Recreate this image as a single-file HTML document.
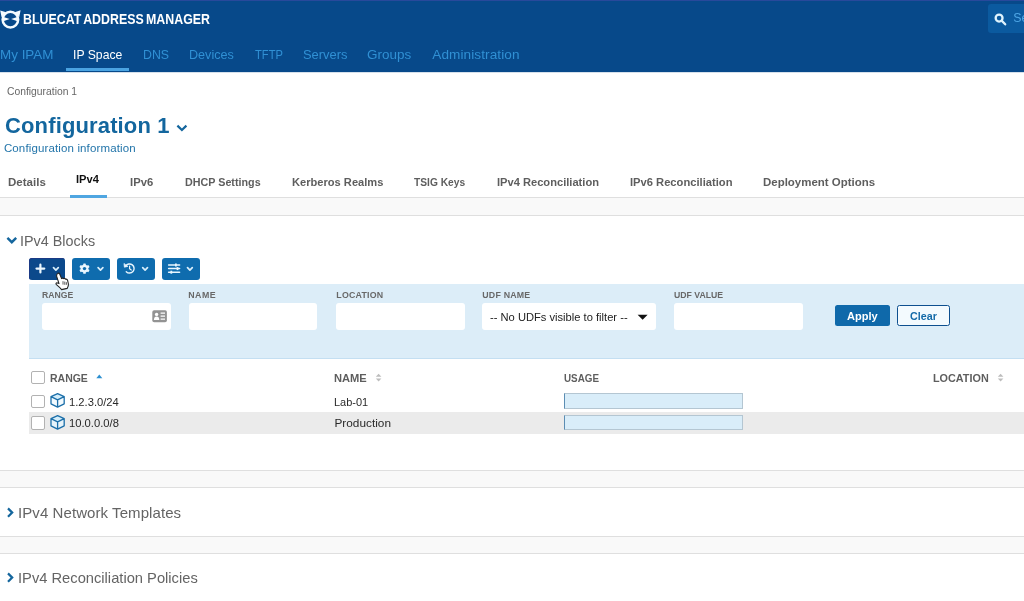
<!DOCTYPE html>
<html><head><meta charset="utf-8">
<style>
*{box-sizing:border-box;margin:0;padding:0}
html,body{width:1024px;height:601px;overflow:hidden;background:#fff;font-family:"Liberation Sans",sans-serif}
body{position:relative;filter:blur(0.5px)}
.a,.t,svg{position:absolute}
.t{white-space:nowrap}
.hl{left:0;width:1024px;height:1.4px;background:#dfdfdf}
.band{left:0;width:1024px;background:#f9f9f9}
.tb{top:258.4px;height:21.4px;border-radius:3px;background:#0f6cae}
.fi{top:303.2px;height:27.1px;background:#fff;border-radius:3px}
.cb{left:30.8px;width:13.8px;height:13.4px;border:1.8px solid #b2b2b2;border-radius:2px;background:#fff}
.ub{left:563.8px;width:179.4px;height:15.2px;background:#d9edf9;border:1px solid #b4c6d2;border-left:1.3px solid #5b8db3}
</style></head><body>
<!-- header -->
<div class="a" style="left:0;top:0;width:1024px;height:71.9px;background:#07498a"></div>
<div class="a" style="left:0;top:0;width:1024px;height:1.2px;background:#28499b"></div>
<div class="a" style="left:0;top:71.9px;width:1024px;height:1px;background:#c3d3e3;opacity:.7"></div>
<div class="a" style="left:65.6px;top:68px;width:63.4px;height:2.8px;background:#4aa3e1"></div>
<div class="a" style="left:988.3px;top:4.2px;width:40px;height:28.4px;background:#0b5a9f;border-radius:3px"></div>
<svg style="left:0;top:8px" width="24" height="24" viewBox="0 0 24 24">
 <circle cx="10.4" cy="11.6" r="7.8" fill="none" stroke="#f4fbff" stroke-width="2.5"/>
 <path d="M1.6 9.2 L0.2 2.4 L6.2 4.2 Z M19.2 9.2 L20.6 2.3 L14.6 4.2 Z" fill="#f4fbff"/>
 <path d="M2.6 8.7 L9.7 11.1 L2.6 13.5 Z M18.2 8.7 L11.1 11.1 L18.2 13.5 Z" fill="#f4fbff"/>
</svg>
<svg style="left:992.6px;top:12px" width="16" height="16" viewBox="0 0 16 16"><circle cx="6.1" cy="6.1" r="3.45" fill="none" stroke="#dff3fd" stroke-width="2.3"/><path d="M8.9 8.9 L12.2 12.3" stroke="#dff3fd" stroke-width="2.3" stroke-linecap="round"/></svg>

<!-- title chevron -->
<svg style="left:176px;top:123.6px" width="12" height="9" viewBox="0 0 12 9"><path d="M1.4 1.6 L5.9 6 L10.4 1.6" fill="none" stroke="#14669d" stroke-width="2.2"/></svg>

<!-- tabs lines -->
<div class="a band" style="top:197.6px;height:18px"></div>
<div class="a hl" style="top:196.8px"></div>
<div class="a hl" style="top:215px"></div>
<div class="a" style="left:70px;top:194.8px;width:36.8px;height:2.8px;background:#4fa6e1"></div>

<!-- section chevrons -->
<svg style="left:6.2px;top:235.5px" width="12" height="10" viewBox="0 0 12 10"><path d="M1.4 1.8 L5.8 6.2 L10.2 1.8" fill="none" stroke="#14669d" stroke-width="2.4"/></svg>
<svg style="left:6.4px;top:506.6px" width="9" height="12" viewBox="0 0 9 12"><path d="M2 1.4 L6.2 5.6 L2 9.8" fill="none" stroke="#14669d" stroke-width="2.2"/></svg>
<svg style="left:6.4px;top:572.2px" width="9" height="12" viewBox="0 0 9 12"><path d="M2 1.4 L6.2 5.6 L2 9.8" fill="none" stroke="#14669d" stroke-width="2.2"/></svg>

<!-- toolbar -->
<div class="a tb" style="left:29.1px;width:36px;background:#0b498b;box-shadow:inset 1px 1px 0 #1b3a85"></div>
<div class="a tb" style="left:72.1px;width:37.8px"></div>
<div class="a tb" style="left:117.1px;width:37.8px"></div>
<div class="a tb" style="left:161.9px;width:37.8px"></div>
<svg style="left:29px;top:258px" width="172" height="22" viewBox="0 0 172 22">
 <g fill="none" stroke="#d9eefb" stroke-width="1.7" stroke-linecap="round" stroke-linejoin="round">
  <path d="M24.5 9.7 L26.9 12.1 L29.3 9.7"/>
  <path d="M69.1 9.7 L71.5 12.1 L73.9 9.7"/>
  <path d="M113.7 9.7 L116.1 12.1 L118.5 9.7"/>
  <path d="M158.5 9.7 L160.9 12.1 L163.3 9.7"/>
 </g>
 <!-- plus -->
 <path d="M7.5 10.55 H15.3 M11.4 6.65 V14.45" stroke="#eaf6fe" stroke-width="2.2" stroke-linecap="round" fill="none"/>
 <!-- gear -->
 <g transform="translate(55.5,10.6)">
  <g fill="#eaf6fe">
   <rect x="-1.3" y="-5.2" width="2.6" height="10.4" rx=".6"/>
   <rect x="-1.3" y="-5.2" width="2.6" height="10.4" rx=".6" transform="rotate(60)"/>
   <rect x="-1.3" y="-5.2" width="2.6" height="10.4" rx=".6" transform="rotate(120)"/>
   <circle r="3.9"/>
  </g>
  <circle r="1.7" fill="#0f6cae"/>
 </g>
 <!-- history -->
 <g transform="translate(100.6,10.5) scale(.93)" fill="none" stroke="#eaf6fe" stroke-linecap="round" stroke-linejoin="round">
  <path d="M-4.2 -2.6 A4.9 4.9 0 1 1 -3.6 3.4" stroke-width="1.5"/>
  <path d="M-6 -5 L-5.6 -1.4 L-2.2 -2.2 Z" fill="#eaf6fe" stroke-width=".8"/>
  <path d="M0 -2.6 V0.4 L1.8 1.6" stroke-width="1.3"/>
 </g>
 <!-- sliders -->
 <g stroke="#eaf6fe" stroke-width="1.5" fill="none" stroke-linecap="round">
  <path d="M139.6 7 H150.6 M139.6 10.6 H150.6 M139.6 14.2 H150.6"/>
 </g>
 <g fill="#eaf6fe"><rect x="146" y="5.5" width="1.8" height="3"/><rect x="147.6" y="9.1" width="1.8" height="3"/><rect x="141.4" y="12.7" width="1.8" height="3"/></g>
</svg>

<!-- filter panel -->
<div class="a" style="left:28.8px;top:284.3px;width:996px;height:74.6px;background:#dcedf8;border-bottom:1.2px solid #c4dff2"></div>
<div class="a fi" style="left:42px;width:128.6px"></div>
<div class="a fi" style="left:188.8px;width:128.7px"></div>
<div class="a fi" style="left:335.8px;width:129.1px"></div>
<div class="a fi" style="left:482.4px;width:173.4px"></div>
<div class="a fi" style="left:674.2px;width:128.7px"></div>
<svg style="left:152px;top:310px" width="16" height="13" viewBox="0 0 16 13">
 <rect x=".3" y=".2" width="14.6" height="12" rx="1.8" fill="#939393"/>
 <circle cx="4.6" cy="4.4" r="1.7" fill="#fff"/><path d="M1.9 10 Q2 6.6 4.6 6.6 Q7.2 6.6 7.3 10 Z" fill="#fff"/>
 <path d="M8.6 3.2 H13 M8.6 6.2 H13 M8.6 9.2 H13" stroke="#fff" stroke-width="1.3"/>
</svg>
<svg style="left:637px;top:314px" width="12" height="7" viewBox="0 0 12 7"><path d="M0.6 0.7 H10.6 L5.6 5.7 Z" fill="#111"/></svg>
<div class="a" style="left:834.9px;top:305.2px;width:55.5px;height:21.2px;background:#0f69aa;border-radius:2.5px"></div>
<div class="a" style="left:897.1px;top:305.2px;width:52.6px;height:21.2px;background:#f3fafe;border:1.5px solid #0d4f8f;border-radius:2.5px"></div>

<!-- table -->
<div class="a" style="left:29px;top:412.3px;width:995px;height:21.4px;background:#ebebeb"></div>
<div class="a cb" style="top:370.6px"></div>
<div class="a cb" style="top:394.7px"></div>
<div class="a cb" style="top:416.2px"></div>
<svg style="left:96px;top:373.6px" width="7" height="5" viewBox="0 0 7 5"><path d="M0.3 4.2 L3.3 0.6 L6.3 4.2 Z" fill="#2c8fd0"/></svg>
<svg style="left:375px;top:373px" width="7" height="10" viewBox="0 0 7 10"><path d="M0.8 3.8 L3.6 0.8 L6.4 3.8 Z M0.8 5.6 L3.6 8.6 L6.4 5.6 Z" fill="#bdbdbd"/></svg>
<svg style="left:997px;top:373px" width="7" height="10" viewBox="0 0 7 10"><path d="M0.8 3.8 L3.6 0.8 L6.4 3.8 Z M0.8 5.6 L3.6 8.6 L6.4 5.6 Z" fill="#bdbdbd"/></svg>
<svg style="left:49px;top:392px" width="18" height="17" viewBox="0 0 18 17"><g id="cube"><path d="M8.6 1.6 L15.2 4.6 L8.6 7.8 L2 4.6 Z" fill="#d4eefb"/><path d="M2 4.6 L8.6 7.8 L15.2 4.6 V11.8 L8.6 15.2 L2 11.8 Z" fill="#f2faff"/><path d="M8.6 1.6 L15.2 4.6 V11.8 L8.6 15.2 L2 11.8 V4.6 Z M2 4.6 L8.6 7.8 L15.2 4.6 M8.6 7.8 V15.2" fill="none" stroke="#1c6fa9" stroke-width="1.3" stroke-linejoin="round"/></g></svg>
<svg style="left:49px;top:413.8px" width="18" height="17" viewBox="0 0 18 17"><path d="M8.6 1.6 L15.2 4.6 L8.6 7.8 L2 4.6 Z" fill="#d4eefb"/><path d="M2 4.6 L8.6 7.8 L15.2 4.6 V11.8 L8.6 15.2 L2 11.8 Z" fill="#e6f3fa"/><path d="M8.6 1.6 L15.2 4.6 V11.8 L8.6 15.2 L2 11.8 V4.6 Z M2 4.6 L8.6 7.8 L15.2 4.6 M8.6 7.8 V15.2" fill="none" stroke="#1c6fa9" stroke-width="1.3" stroke-linejoin="round"/></svg>
<div class="a ub" style="top:393.4px"></div>
<div class="a ub" style="top:415px"></div>

<!-- bottom sections -->
<div class="a band" style="top:470.6px;height:17px"></div>
<div class="a hl" style="top:470px"></div>
<div class="a hl" style="top:487px"></div>
<div class="a band" style="top:536.6px;height:17px"></div>
<div class="a hl" style="top:535.8px"></div>
<div class="a hl" style="top:552.8px"></div>

<div class="t" style="left:22.73px;top:10.68px;font-size:14.2px;line-height:17px;font-weight:bold;color:#fff;letter-spacing:0.000px;transform:scaleX(0.8723);transform-origin:0 0;word-spacing:-1.2px;">BLUECAT ADDRESS MANAGER</div>
<div class="t" style="left:0.29px;top:47.29px;font-size:13.6px;line-height:16px;font-weight:normal;color:#3090d4;letter-spacing:0.000px;transform:scaleX(0.9880);transform-origin:0 0;">My IPAM</div>
<div class="t" style="left:72.69px;top:47.29px;font-size:13.6px;line-height:16px;font-weight:normal;color:#fff;letter-spacing:0.000px;transform:scaleX(0.8989);transform-origin:0 0;">IP Space</div>
<div class="t" style="left:142.66px;top:47.29px;font-size:13.6px;line-height:16px;font-weight:normal;color:#3090d4;letter-spacing:0.000px;transform:scaleX(0.9078);transform-origin:0 0;">DNS</div>
<div class="t" style="left:189.36px;top:47.29px;font-size:13.6px;line-height:16px;font-weight:normal;color:#3090d4;letter-spacing:0.000px;transform:scaleX(0.9267);transform-origin:0 0;">Devices</div>
<div class="t" style="left:254.91px;top:47.29px;font-size:13.6px;line-height:16px;font-weight:normal;color:#3090d4;letter-spacing:0.000px;transform:scaleX(0.8211);transform-origin:0 0;">TFTP</div>
<div class="t" style="left:303.13px;top:47.29px;font-size:13.6px;line-height:16px;font-weight:normal;color:#3090d4;letter-spacing:0.000px;transform:scaleX(0.9510);transform-origin:0 0;">Servers</div>
<div class="t" style="left:367.45px;top:47.29px;font-size:13.6px;line-height:16px;font-weight:normal;color:#3090d4;letter-spacing:0.000px;transform:scaleX(0.9893);transform-origin:0 0;">Groups</div>
<div class="t" style="left:432.25px;top:47.29px;font-size:13.6px;line-height:16px;font-weight:normal;color:#3090d4;letter-spacing:0.085px;">Administration</div>
<div class="t" style="left:1013.30px;top:11.20px;font-size:12.4px;line-height:15px;font-weight:normal;color:#4ea6e6;letter-spacing:0.044px;">Se</div>
<div class="t" style="left:6.55px;top:84.96px;font-size:10.8px;line-height:13px;font-weight:normal;color:#666;letter-spacing:0.000px;transform:scaleX(0.9569);transform-origin:0 0;">Configuration 1</div>
<div class="t" style="left:5.01px;top:113.18px;font-size:22px;line-height:26px;font-weight:bold;color:#13669e;letter-spacing:0.139px;">Configuration 1</div>
<div class="t" style="left:3.88px;top:140.72px;font-size:11.5px;line-height:14px;font-weight:normal;color:#2375aa;letter-spacing:0.136px;">Configuration information</div>
<div class="t" style="left:7.90px;top:175.02px;font-size:11.5px;line-height:14px;font-weight:bold;color:#5e5e5e;letter-spacing:0.035px;">Details</div>
<div class="t" style="left:76.38px;top:172.22px;font-size:11.5px;line-height:14px;font-weight:bold;color:#111;letter-spacing:0.000px;transform:scaleX(0.9670);transform-origin:0 0;">IPv4</div>
<div class="t" style="left:130.02px;top:175.02px;font-size:11.5px;line-height:14px;font-weight:bold;color:#5e5e5e;letter-spacing:0.000px;transform:scaleX(0.9791);transform-origin:0 0;">IPv6</div>
<div class="t" style="left:184.83px;top:175.02px;font-size:11.5px;line-height:14px;font-weight:bold;color:#5e5e5e;letter-spacing:0.000px;transform:scaleX(0.9342);transform-origin:0 0;">DHCP Settings</div>
<div class="t" style="left:292.44px;top:175.02px;font-size:11.5px;line-height:14px;font-weight:bold;color:#5e5e5e;letter-spacing:0.000px;transform:scaleX(0.9662);transform-origin:0 0;">Kerberos Realms</div>
<div class="t" style="left:414.22px;top:175.02px;font-size:11.5px;line-height:14px;font-weight:bold;color:#5e5e5e;letter-spacing:0.000px;transform:scaleX(0.8883);transform-origin:0 0;">TSIG Keys</div>
<div class="t" style="left:496.60px;top:175.02px;font-size:11.5px;line-height:14px;font-weight:bold;color:#5e5e5e;letter-spacing:0.000px;transform:scaleX(0.9671);transform-origin:0 0;">IPv4 Reconciliation</div>
<div class="t" style="left:630.18px;top:175.02px;font-size:11.5px;line-height:14px;font-weight:bold;color:#5e5e5e;letter-spacing:0.000px;transform:scaleX(0.9716);transform-origin:0 0;">IPv6 Reconciliation</div>
<div class="t" style="left:762.82px;top:175.02px;font-size:11.5px;line-height:14px;font-weight:bold;color:#5e5e5e;letter-spacing:0.000px;transform:scaleX(0.9961);transform-origin:0 0;">Deployment Options</div>
<div class="t" style="left:20.45px;top:231.60px;font-size:15px;line-height:18px;font-weight:normal;color:#646464;letter-spacing:0.000px;transform:scaleX(0.9579);transform-origin:0 0;">IPv4 Blocks</div>
<div class="t" style="left:42.32px;top:289.75px;font-size:8.8px;line-height:11px;font-weight:bold;color:#686868;letter-spacing:0.000px;transform:scaleX(0.9823);transform-origin:0 0;">RANGE</div>
<div class="t" style="left:188.14px;top:289.75px;font-size:8.8px;line-height:11px;font-weight:bold;color:#686868;letter-spacing:0.564px;">NAME</div>
<div class="t" style="left:336.31px;top:289.75px;font-size:8.8px;line-height:11px;font-weight:bold;color:#686868;letter-spacing:0.230px;">LOCATION</div>
<div class="t" style="left:482.25px;top:289.75px;font-size:8.8px;line-height:11px;font-weight:bold;color:#686868;letter-spacing:0.217px;">UDF NAME</div>
<div class="t" style="left:673.77px;top:289.75px;font-size:8.8px;line-height:11px;font-weight:bold;color:#686868;letter-spacing:0.000px;transform:scaleX(0.9887);transform-origin:0 0;">UDF VALUE</div>
<div class="t" style="left:489.70px;top:309.61px;font-size:11.8px;line-height:14px;font-weight:normal;color:#222;letter-spacing:0.000px;transform:scaleX(0.9456);transform-origin:0 0;">-- No UDFs visible to filter --</div>
<div class="t" style="left:847.46px;top:308.91px;font-size:11.8px;line-height:14px;font-weight:bold;color:#fff;letter-spacing:0.000px;transform:scaleX(0.9367);transform-origin:0 0;">Apply</div>
<div class="t" style="left:909.88px;top:308.91px;font-size:11.8px;line-height:14px;font-weight:bold;color:#146aa8;letter-spacing:0.000px;transform:scaleX(0.9086);transform-origin:0 0;">Clear</div>
<div class="t" style="left:49.59px;top:370.88px;font-size:11.3px;line-height:14px;font-weight:bold;color:#5e5e5e;letter-spacing:0.000px;transform:scaleX(0.9276);transform-origin:0 0;">RANGE</div>
<div class="t" style="left:334.13px;top:370.88px;font-size:11.3px;line-height:14px;font-weight:bold;color:#5e5e5e;letter-spacing:0.000px;transform:scaleX(0.9850);transform-origin:0 0;">NAME</div>
<div class="t" style="left:564.16px;top:370.88px;font-size:11.3px;line-height:14px;font-weight:bold;color:#5e5e5e;letter-spacing:0.000px;transform:scaleX(0.8701);transform-origin:0 0;">USAGE</div>
<div class="t" style="left:932.69px;top:370.88px;font-size:11.3px;line-height:14px;font-weight:bold;color:#5e5e5e;letter-spacing:0.000px;transform:scaleX(0.9579);transform-origin:0 0;">LOCATION</div>
<div class="t" style="left:68.86px;top:394.91px;font-size:11.8px;line-height:14px;font-weight:normal;color:#2a2a2a;letter-spacing:0.000px;transform:scaleX(0.9489);transform-origin:0 0;">1.2.3.0/24</div>
<div class="t" style="left:69.09px;top:416.01px;font-size:11.8px;line-height:14px;font-weight:normal;color:#2a2a2a;letter-spacing:0.000px;transform:scaleX(0.9520);transform-origin:0 0;">10.0.0.0/8</div>
<div class="t" style="left:334.33px;top:394.91px;font-size:11.8px;line-height:14px;font-weight:normal;color:#2a2a2a;letter-spacing:0.000px;transform:scaleX(0.9310);transform-origin:0 0;">Lab-01</div>
<div class="t" style="left:334.46px;top:416.01px;font-size:11.8px;line-height:14px;font-weight:normal;color:#2a2a2a;letter-spacing:0.015px;">Production</div>
<div class="t" style="left:18.03px;top:503.80px;font-size:15px;line-height:18px;font-weight:normal;color:#646464;letter-spacing:0.078px;">IPv4 Network Templates</div>
<div class="t" style="left:17.96px;top:569.00px;font-size:15px;line-height:18px;font-weight:normal;color:#646464;letter-spacing:0.000px;transform:scaleX(0.9799);transform-origin:0 0;">IPv4 Reconciliation Policies</div>

<!-- cursor hand -->
<svg style="left:53px;top:272px" width="18" height="19" viewBox="0 0 18 19">
 <path d="M4.6 1.6 Q5.6 0.6 6.6 1.8 L8.6 6.6 Q9.6 5.6 10.6 6.6 Q11.8 6 12.6 7.2 Q14.2 6.8 14.6 8.4 L15.4 12 Q15.6 14.4 14.2 16.4 L8.6 17.6 Q6.6 15.2 3.4 12.6 Q2.4 11.2 3.8 10.8 L6 11.6 L3.6 4.2 Q3.4 2.4 4.6 1.6 Z" fill="#fff" stroke="#222" stroke-width="1.1" stroke-linejoin="round"/>
 <path d="M10 9.2 V12.6 M11.8 9.6 V12.8 M13.4 10.2 V12.8" stroke="#333" stroke-width=".8"/>
</svg>
</body></html>
